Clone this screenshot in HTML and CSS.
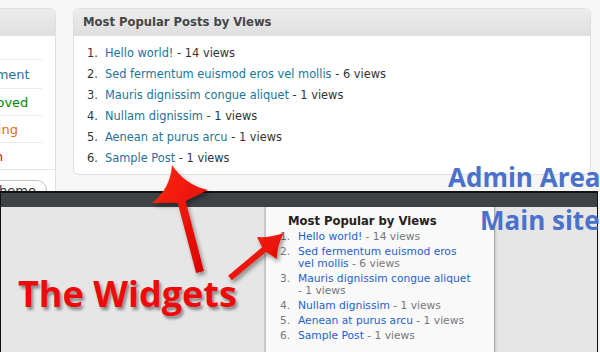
FILE: index.html
```html
<!DOCTYPE html>
<html>
<head>
  <meta charset="utf-8">
  <title>Most Popular Posts by Views</title>
  <link rel="stylesheet" href="styles.css">
</head>
<body>
  <div class="admin">
    <div class="side-panel">
      <div class="side-head"></div>
      <div class="side-table">
        <div class="side-row first"></div>
        <div class="side-row tall"><span class="c-blue">Comment</span></div>
        <div class="side-row"><span class="c-green">Approved</span></div>
        <div class="side-row"><span class="c-orange">Pending</span></div>
        <div class="side-row last"><span class="c-red">Spam</span></div>
      </div>
      <div class="side-actions">
        <span class="theme-btn">Theme</span>
      </div>
    </div>

    <div class="widget">
      <div class="widget-head">Most Popular Posts by Views</div>
      <ol class="popular">
        <li><span><a href="#">Hello world!</a> - 14 views</span></li>
        <li><span><a href="#">Sed fermentum euismod eros vel mollis</a> - 6 views</span></li>
        <li><span><a href="#">Mauris dignissim congue aliquet</a> - 1 views</span></li>
        <li><span><a href="#">Nullam dignissim</a> - 1 views</span></li>
        <li><span><a href="#">Aenean at purus arcu</a> - 1 views</span></li>
        <li><span><a href="#">Sample Post</a> - 1 views</span></li>
      </ol>
    </div>
  </div>

  <div class="site">
    <div class="site-bar"></div>
    <div class="site-body">
      <div class="site-sidebar">
        <h3 class="site-title">Most Popular by Views</h3>
        <ol class="popular small">
          <li><span><a href="#">Hello world!</a> - 14 views</span></li>
          <li><span><a href="#">Sed fermentum euismod eros vel mollis</a> - 6 views</span></li>
          <li><span><a href="#">Mauris dignissim congue aliquet</a> - 1 views</span></li>
          <li><span><a href="#">Nullam dignissim</a> - 1 views</span></li>
          <li><span><a href="#">Aenean at purus arcu</a> - 1 views</span></li>
          <li><span><a href="#">Sample Post</a> - 1 views</span></li>
        </ol>
      </div>
    </div>
  </div>

  <!-- callouts drawn over the two screenshots -->
  <div class="label label-admin">Admin Area</div>
  <div class="label label-site">Main site</div>
  <div class="label label-widgets">The Widgets</div>

  <svg class="arrows" width="600" height="352" viewBox="0 0 600 352">
    <defs>
      <linearGradient id="red" x1="0" y1="0" x2="1" y2="1">
        <stop offset="0" stop-color="#ff2a10"/>
        <stop offset="1" stop-color="#d80000"/>
      </linearGradient>
      <filter id="shade" x="-30%" y="-30%" width="160%" height="160%">
        <feDropShadow dx="2" dy="3" stdDeviation="2" flood-color="#000" flood-opacity="0.4"/>
      </filter>
    </defs>
    <path d="M172,165 Q185,185 208,190 L185.5,200.7 L203.9,271 L196.1,273 L177.7,202.7 L152,203 Q170.5,188.8 172,165 Z" fill="url(#red)" filter="url(#shade)"/>
    <path d="M284,233 Q276.5,245.8 277,259 L265.9,251.9 L231.9,280.3 L228.1,275.7 L262.1,247.3 L257,237 Q270,238 284,233 Z" fill="url(#red)" filter="url(#shade)"/>
  </svg>
</body>
</html>
```

FILE: styles.css
```css
html, body {
  margin: 0;
}

body {
  position: relative;
  width: 600px;
  height: 352px;
  overflow: hidden;
  background: #f6f6f6;
  font-family: "DejaVu Sans", Verdana, sans-serif;
}

a {
  text-decoration: none;
}

/* admin dashboard */

.admin {
  display: flex;
  align-items: flex-start;
  height: 191px;
  padding-top: 8px;
  box-sizing: border-box;
  overflow: hidden;
}

.side-panel {
  flex: none;
  width: 100px;
  height: 200px;
  margin-left: -46px;
  background: #fff;
  border: 1px solid #dfdfdf;
  border-radius: 0 6px 0 0;
}

.side-head {
  height: 26px;
  background: linear-gradient(#ececec, #dfdfdf);
  border-bottom: 1px solid #dfdfdf;
  border-radius: 0 6px 0 0;
}

.side-table {
  border-bottom: 1px solid #e6e6e6;
}

.side-row {
  display: flex;
  align-items: center;
  height: 26px;
  margin-right: 13px;
  padding-left: 11px;
  border-bottom: 1px solid #ececec;
  font-size: 13px;
}

.side-row.first {
  height: 23px;
}

.side-row.tall {
  height: 28px;
}

.side-row.last {
  height: 26px;
  border-bottom: 0;
}

.c-blue { color: #21759b; }
.c-green { color: #008a00; }
.c-orange { color: #e66f00; }
.c-red { color: #f00; }

.side-actions {
  padding-top: 10px;
  padding-right: 8px;
  text-align: right;
}

.theme-btn {
  display: inline-block;
  height: 20px;
  padding: 0 10px 0 14px;
  border: 1px solid #c4c4c4;
  border-radius: 10px;
  background: #fcfcfc;
  font-size: 13px;
  line-height: 20px;
  color: #333;
}

.widget {
  flex: none;
  width: 518px;
  height: 167px;
  margin-left: 17px;
  box-sizing: border-box;
  background: #fff;
  border: 1px solid #dfdfdf;
  border-radius: 6px;
}

.widget-head {
  height: 26px;
  padding-left: 9px;
  background: linear-gradient(#ececec, #dfdfdf);
  border-bottom: 1px solid #dfdfdf;
  border-radius: 6px 6px 0 0;
  font-size: 11.6px;
  font-weight: bold;
  line-height: 27px;
  color: #464646;
}

.popular {
  margin: 0;
  padding: 7px 0 0 13px;
  list-style: none;
  counter-reset: item;
  font-size: 11.4px;
  line-height: 21px;
  color: #333;
}

.popular li {
  display: flex;
  counter-increment: item;
}

.popular li::before {
  content: counter(item) ".";
  flex: none;
  width: 18px;
}

.popular a {
  color: #21759b;
}

/* public site */

.site {
  width: 596px;
  height: 161px;
  border: 1px solid #111;
  border-top-width: 2px;
  border-bottom: 0;
  background: #e6e6e6;
}

.site-bar {
  height: 14px;
  background: #3e4245;
}

.site-body {
  display: flex;
  height: 145px;
}

.site-sidebar {
  width: 228px;
  margin-left: 263px;
  background: #f9f9f9;
  border-left: 2px solid #c6c6c6;
  border-right: 1px solid #a9a9a9;
  box-shadow: 1px 0 2px rgba(0, 0, 0, 0.15);
}

.site-title {
  margin: 0;
  padding: 7px 0 0 22px;
  font-size: 11.6px;
  line-height: 14px;
  color: #222;
}

.popular.small {
  padding: 3px 20px 0 14px;
  font-size: 10.7px;
  line-height: 12px;
  color: #777;
}

.popular.small li {
  margin-bottom: 3px;
}

.popular.small a {
  color: #1f5fcf;
}

/* callouts */

.label {
  position: absolute;
  font-family: "Open Sans", sans-serif;
  font-weight: bold;
  line-height: 1;
  white-space: nowrap;
}

.label-admin {
  left: 448px;
  top: 164px;
  font-size: 26px;
  color: #4a72cb;
}

.label-site {
  left: 480px;
  top: 207px;
  font-size: 26px;
  color: #4a72cb;
}

.label-widgets {
  left: 18px;
  top: 276px;
  font-size: 36px;
  color: #ec0a0a;
  text-shadow: 2px 3px 3px rgba(0, 0, 0, 0.4);
}

.arrows {
  position: absolute;
  left: 0;
  top: 0;
  pointer-events: none;
}
```
